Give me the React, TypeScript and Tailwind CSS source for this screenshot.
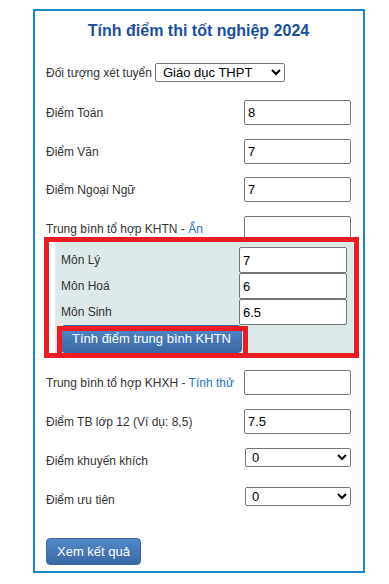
import React from 'react'

const font = { fontFamily: '"Liberation Sans", Arial, sans-serif' }

function Field({ label, value, link }: { label: string; value?: string; link?: string }) {
  return (
    <div className="flex h-[25px] items-center justify-between">
      <span className="text-[12px] text-[#333]">
        {label}
        {link && <span className="text-[#1f6fbf]">{link}</span>}
      </span>
      <input
        type="text"
        defaultValue={value}
        className="h-[25px] w-[107px] rounded-[2px] border border-[#767676] bg-white px-[3px] text-[13px] text-black outline-none"
      />
    </div>
  )
}

function SelectField({ label }: { label: string }) {
  return (
    <div className="relative flex h-[25px] items-center justify-between">
      <span className="text-[12px] text-[#333]">{label}</span>
      <select
        defaultValue="0"
        className="absolute right-0 top-0 h-[19px] w-[106px] rounded-[2px] border border-[#767676] bg-white pl-[2px] text-[13px] text-black"
      >
        <option value="0">0</option>
        <option value="0.5">0.5</option>
        <option value="1">1</option>
      </select>
    </div>
  )
}

function SubjectRow({ label, value }: { label: string; value: string }) {
  return (
    <div className="flex h-[26px] items-center justify-between">
      <span className="text-[12px] text-[#333]">{label}</span>
      <input
        type="text"
        defaultValue={value}
        className="h-[26px] w-[108px] rounded-[2px] border border-[#767676] bg-white px-[3px] text-[13px] text-black outline-none"
      />
    </div>
  )
}

export default function App() {
  return (
    <div className="min-h-[584px] bg-white pt-[9px]" style={font}>
      <div className="ml-[33px] w-[332px] border-2 border-[#1b86c8] pb-[6px] pl-[11px] pr-[12px]">
        {/* Title */}
        <h1 className="pt-[11px] text-center text-[16px] font-bold leading-[18px] text-[#1b4f9c]">
          Tính điểm thi tốt nghiệp 2024
        </h1>

        {/* Doi tuong */}
        <div className="mt-[23px] flex h-[19px] items-center">
          <span className="text-[12px] text-[#333]">Đối tượng xét tuyển</span>
          <select
            defaultValue="thpt"
            className="ml-[3px] h-[19px] w-[130px] rounded-[2px] border border-[#767676] bg-white pl-[3px] text-[13px] text-black"
          >
            <option value="thpt">Giáo dục THPT</option>
            <option value="gdtx">Giáo dục thường xuyên</option>
          </select>
        </div>

        <div className="mt-[18px]">
          <Field label="Điểm Toán" value="8" />
        </div>
        <div className="mt-[14px]">
          <Field label="Điểm Văn" value="7" />
        </div>
        <div className="mt-[13px]">
          <Field label="Điểm Ngoại Ngữ" value="7" />
        </div>
        <div className="mt-[14px]">
          <Field label="Trung bình tổ hợp KHTN - " link="Ẩn" />
        </div>

        {/* KHTN panel */}
        <div className="relative ml-[9px] mr-[-2px] bg-[#dde9e8] pb-[5px] pl-[6px] pr-[6px] pt-[6px]">
          <SubjectRow label="Môn Lý" value="7" />
          <SubjectRow label="Môn Hoá" value="6" />
          <SubjectRow label="Môn Sinh" value="6.5" />
          <div className="relative w-[181px]">
            <button className="h-[28px] w-[181px] rounded-[4px] border border-[#3a68a2] bg-linear-to-b from-[#5289c9] to-[#3a69a5] text-[13px] text-white">
              Tính điểm trung bình KHTN
            </button>
            {/* annotation around the button */}
            <div className="pointer-events-none absolute bottom-[-5px] left-[-4px] right-[-6px] top-[1px] border-[5px] border-[#ec1c24]" />
          </div>
          {/* annotation around the panel */}
          <div className="pointer-events-none absolute bottom-0 left-[-11px] right-[-6px] top-[-4px] border-[5px] border-[#ec1c24]" />
        </div>

        <div className="mt-[12px]">
          <Field label="Trung bình tổ hợp KHXH - " link="Tính thử" />
        </div>
        <div className="mt-[14px]">
          <Field label="Điểm TB lớp 12 (Ví dụ: 8,5)" value="7.5" />
        </div>
        <div className="mt-[14px]">
          <SelectField label="Điểm khuyến khích" />
        </div>
        <div className="mt-[14px]">
          <SelectField label="Điểm ưu tiên" />
        </div>

        <button className="mt-[26px] h-[27px] w-[95px] rounded-[4px] border border-[#3a68a2] bg-linear-to-b from-[#5289c9] to-[#3a69a5] text-[13px] text-white">
          Xem kết quả
        </button>
      </div>
    </div>
  )
}
